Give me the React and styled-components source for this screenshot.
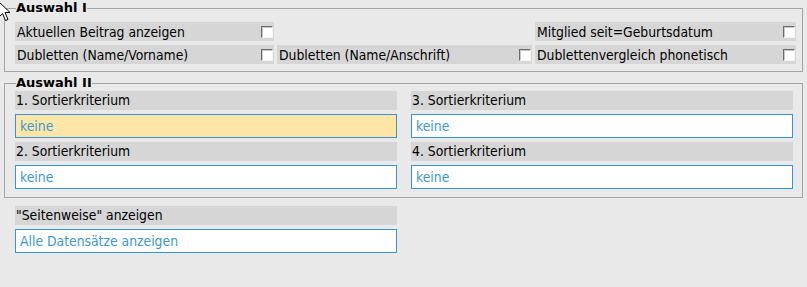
import React from "react"
import styled, { createGlobalStyle } from "styled-components"

const GlobalStyle = createGlobalStyle`
  html, body {
    margin: 0;
    padding: 0;
    background: #e9e9e9;
  }
  body {
    font-family: "DejaVu Sans Condensed", "DejaVu Sans", Verdana, sans-serif;
    font-size: 13.8px;
    color: #000;
  }
`

// Styles
const Page = styled.div`
  position: relative;
  height: 287px;
  padding: 0 4px;
  overflow: hidden;
`

const Group = styled.fieldset`
  margin: ${(p) => p.$top || 0}px 0 0 0;
  border: 1px solid #a5a5a5;
  padding: ${(p) => p.$padTop || 0}px 6px ${(p) => p.$padBottom || 7}px 10px;
  min-width: 0;
`

const Legend = styled.legend`
  font-family: "DejaVu Sans", Verdana, sans-serif;
  font-weight: bold;
  font-size: 13px;
  line-height: 16px;
  padding: 0;
  margin-left: 1px;
`

const OptionGrid = styled.div`
  display: grid;
  grid-template-columns: 259px 255px 261px;
  column-gap: 3px;
  row-gap: 4px;
`

const Option = styled.label`
  display: flex;
  align-items: center;
  justify-content: space-between;
  height: 19px;
  padding: 0 1px 0 2px;
  background: ${(p) => (p.$empty ? "transparent" : "#d6d6d6")};
  white-space: nowrap;
`

const Check = styled.span`
  display: block;
  box-sizing: border-box;
  width: 12px;
  height: 12px;
  background: #fff;
  border-style: solid;
  border-width: 1px;
  border-color: #6b6b6b #f4f4f4 #f4f4f4 #6b6b6b;
  box-shadow: inset 1px 1px 0 #c8c8c8;
`

const Columns = styled.div`
  display: grid;
  grid-template-columns: 382px 382px;
  column-gap: 14px;
  padding-right: 3px;
`

const Field = styled.div`
  display: flex;
  flex-direction: column;
  gap: 4px;
`

const Caption = styled.div`
  height: 19px;
  line-height: 18px;
  padding-left: 1px;
  background: #d6d6d6;
  white-space: nowrap;
`

const Select = styled.div`
  box-sizing: border-box;
  height: 24px;
  line-height: 22px;
  padding-left: 4px;
  border: 1px solid #3794d6;
  background: ${(p) => (p.$active ? "#fde6a6" : "#fff")};
  color: #3b99d8;
`

const Standalone = styled.div`
  width: 382px;
  margin: 8px 0 0 11px;
`

const Cursor = styled.svg`
  position: absolute;
  left: -2px;
  top: 1px;
`

const options = [
  { text: "Aktuellen Beitrag anzeigen" },
  { empty: true },
  { text: "Mitglied seit=Geburtsdatum" },
  { text: "Dubletten (Name/Vorname)" },
  { text: "Dubletten (Name/Anschrift)" },
  { text: "Dublettenvergleich phonetisch" },
]

const SortField = ({ n, active }) => (
  <>
    <Caption>{n}. Sortierkriterium</Caption>
    <Select $active={active}>keine</Select>
  </>
)

const App = () => (
  <Page>
    <GlobalStyle />
    <Group $padTop={6}>
      <Legend>Auswahl I</Legend>
      <OptionGrid>
        {options.map((o, i) =>
          o.empty ? (
            <Option key={i} $empty />
          ) : (
            <Option key={i}>
              <span>{o.text}</span>
              <Check />
            </Option>
          )
        )}
      </OptionGrid>
    </Group>

    <Group $top={3} $padBottom={8}>
      <Legend>Auswahl II</Legend>
      <Columns>
        <Field>
          <SortField n={1} active />
          <SortField n={2} />
        </Field>
        <Field>
          <SortField n={3} />
          <SortField n={4} />
        </Field>
      </Columns>
    </Group>

    <Standalone>
      <Field>
        <Caption>"Seitenweise" anzeigen</Caption>
        <Select>Alle Datensätze anzeigen</Select>
      </Field>
    </Standalone>

    <Cursor width="14" height="22" viewBox="0 0 14 22">
      <path
        d="M0.5 0.5 L0.5 16.5 L4.5 12.5 L7.5 19.5 L10 18.5 L7 11.5 L12 11.5 Z"
        fill="#fff"
        stroke="#000"
        strokeWidth="1"
      />
    </Cursor>
  </Page>
)

export default App
